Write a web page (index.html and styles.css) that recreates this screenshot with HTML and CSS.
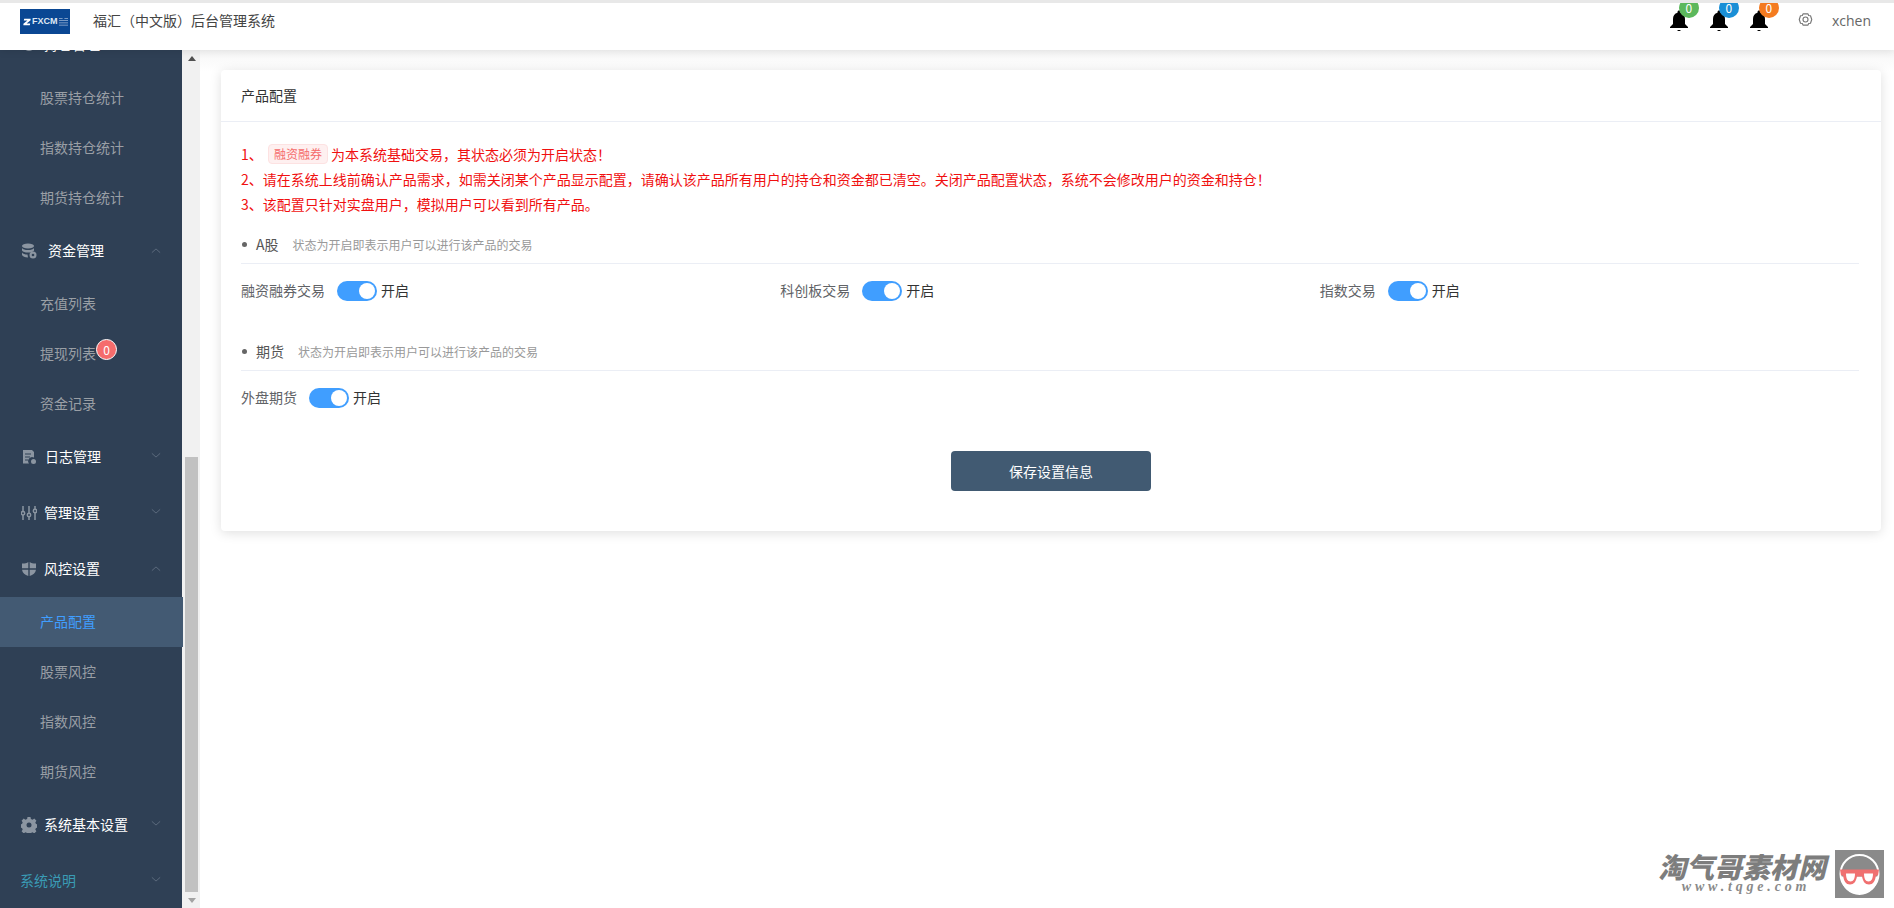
FILE: index.html
```html
<!DOCTYPE html>
<html lang="zh-CN">
<head>
    <meta charset="UTF-8">
    <title>福汇（中文版）后台管理系统</title>
    <link rel="stylesheet" href="styles.css">
</head>
<body>

<!-- Top bar -->
<header class="topbar">
    <div class="logo">
        <svg class="logo-z" viewBox="0 0 10 10"><path d="M1.500 1h8v1.800L4.500 7H9l-.5 2h-8v-1.800L5.500 3H1z" fill="#fff"/></svg>
        <span class="logo-text">FXCM</span>
        <svg class="logo-grid" viewBox="0 0 10 10"><path d="M0 1h4v1H0zM6 1h4v1H6zM0 3.500h10v1H0zM0 6h10v1H0zM0 8.500h10v1H0z" fill="#9fb6d6"/></svg>
    </div>
    <div class="site-title">福汇（中文版）后台管理系统</div>
    <div class="top-right">
        <div class="bell">
            <svg viewBox="0 0 24 24"><path d="M12 23c1 0 1.700-.4 1.700-1h-3.400c0 .6.700 1 1.700 1zM18 16v-5c0-3.100-1.600-5.600-4.500-6.300V4c0-.8-.7-1.500-1.500-1.500s-1.500.7-1.500 1.500v.7C7.600 5.400 6 7.900 6 11v5l-3 3v1h18v-1z"/></svg>
            <span class="bell-num green">0</span>
        </div>
        <div class="bell">
            <svg viewBox="0 0 24 24"><path d="M12 23c1 0 1.700-.4 1.700-1h-3.400c0 .6.700 1 1.700 1zM18 16v-5c0-3.100-1.600-5.600-4.500-6.300V4c0-.8-.7-1.500-1.500-1.500s-1.500.7-1.500 1.500v.7C7.600 5.400 6 7.900 6 11v5l-3 3v1h18v-1z"/></svg>
            <span class="bell-num blue">0</span>
        </div>
        <div class="bell">
            <svg viewBox="0 0 24 24"><path d="M12 23c1 0 1.700-.4 1.700-1h-3.400c0 .6.700 1 1.700 1zM18 16v-5c0-3.100-1.600-5.600-4.500-6.300V4c0-.8-.7-1.500-1.500-1.500s-1.500.7-1.500 1.500v.7C7.600 5.400 6 7.900 6 11v5l-3 3v1h18v-1z"/></svg>
            <span class="bell-num orange">0</span>
        </div>
        <svg class="top-gear" viewBox="0 0 24 24"><path d="M8 3h8l1 2.500 3 .5 2 6-2 6-3 .5-1 2.500H8l-1-2.500-3-.5-2-6 2-6 3-.5z" fill="none" stroke="#777" stroke-width="1.800" stroke-linejoin="round"/><circle cx="12" cy="12" r="4" fill="none" stroke="#777" stroke-width="1.800"/></svg>
        <span class="username">xchen</span>
    </div>
</header>

<div class="layout">
    <!-- Sidebar, scrolled to its end -->
    <aside class="sidebar">
        <nav class="menu">
            <div class="group">
                <svg class="group-icon" viewBox="0 0 16 16"><circle cx="8" cy="8" r="6" fill="#8b95a1"/></svg>
                <span class="group-name">持仓管理</span>
                <svg class="chevron up" viewBox="0 0 12 12"><path d="M1 8l5-4.500L11 8"/></svg>
            </div>
            <a class="sub">股票持仓统计</a>
            <a class="sub">指数持仓统计</a>
            <a class="sub">期货持仓统计</a>

            <div class="group">
                <svg class="group-icon" viewBox="0 0 16 16"><g fill="#8b95a1"><ellipse cx="7" cy="3" rx="6" ry="2.500"/><path d="M1 5c1 1.500 3 2 6 2s5-.5 6-2v2.500c-1 1.500-3 2-6 2s-5-.5-6-2zM1 9.500c1 1.500 3 2 5.500 2l.5 3c-3.500 0-5-1-6-2.500z"/><circle cx="12" cy="12" r="3.500"/></g><circle cx="12" cy="12" r="1.300" fill="#2f4055"/></svg>
                <span class="group-name gap-b">资金管理</span>
                <svg class="chevron up" viewBox="0 0 12 12"><path d="M1 8l5-4.500L11 8"/></svg>
            </div>
            <a class="sub">充值列表</a>
            <a class="sub">提现列表<span class="sub-num">0</span></a>
            <a class="sub">资金记录</a>

            <div class="group">
                <svg class="group-icon" viewBox="0 0 16 16"><path d="M2 1h9l2 2v5.500a4 4 0 0 0-5 6H2z" fill="#8b95a1"/><path d="M4 5h6M4 8h5M4 11h3" stroke="#2f4055" stroke-width="1.200"/><circle cx="12.500" cy="12.500" r="2.500" fill="#8b95a1"/></svg>
                <span class="group-name gap-c">日志管理</span>
                <svg class="chevron" viewBox="0 0 12 12"><path d="M1 4l5 4.500L11 4"/></svg>
            </div>
            <div class="group">
                <svg class="group-icon" viewBox="0 0 16 16"><g stroke="#8b95a1" stroke-width="1.500" fill="none"><path d="M2 1v5.500M2 10v5M8 1v7M8 12v3M14 1v3M14 8v7"/><circle cx="2" cy="8.200" r="1.700"/><circle cx="8" cy="10" r="1.700"/><circle cx="14" cy="6" r="1.700"/></g></svg>
                <span class="group-name">管理设置</span>
                <svg class="chevron" viewBox="0 0 12 12"><path d="M1 4l5 4.500L11 4"/></svg>
            </div>
            <div class="group">
                <svg class="group-icon" viewBox="0 0 16 16"><path d="M1 2.500C4 2.500 6 2 7.300 1v6.300H1zM8.700 1C10 2 12 2.500 15 2.500v4.800H8.700zM1 8.700h6.300V15C4 14 1.500 12 1 8.700zM8.700 8.700H15C14.500 12 12 14 8.700 15z" fill="#8b95a1"/></svg>
                <span class="group-name">风控设置</span>
                <svg class="chevron up" viewBox="0 0 12 12"><path d="M1 8l5-4.500L11 8"/></svg>
            </div>
            <a class="sub active">产品配置</a>
            <a class="sub">股票风控</a>
            <a class="sub">指数风控</a>
            <a class="sub">期货风控</a>

            <div class="group">
                <svg class="group-icon" viewBox="0 0 16 16"><path d="M6.500 0h3l.4 2 1.700.7 1.700-1.100 2.100 2.100-1.100 1.700.7 1.700 2 .4v3l-2 .4-.7 1.700 1.100 1.700-2.100 2.100-1.700-1.100-1.700.7-.4 2h-3l-.4-2-1.700-.7-1.700 1.100-2.100-2.100 1.100-1.700-.7-1.700-2-.4v-3l2-.4.7-1.700-1.100-1.700 2.100-2.100 1.700 1.100 1.700-.7z" fill="#8b95a1"/><circle cx="8" cy="8" r="2.500" fill="#2f4055"/></svg>
                <span class="group-name">系统基本设置</span>
                <svg class="chevron" viewBox="0 0 12 12"><path d="M1 4l5 4.500L11 4"/></svg>
            </div>
            <div class="group plain">
                <span class="group-name teal">系统说明</span>
                <svg class="chevron" viewBox="0 0 12 12"><path d="M1 4l5 4.500L11 4"/></svg>
            </div>
        </nav>
    </aside>

    <div class="scrollbar">
        <span class="arrow-up"></span>
        <span class="thumb"></span>
        <span class="arrow-down"></span>
    </div>

    <!-- Page content -->
    <main class="content">
        <section class="card">
            <div class="card-head">产品配置</div>
            <div class="card-body">
                <p class="note">1、 <span class="tag">融资融券</span> 为本系统基础交易，其状态必须为开启状态！</p>
                <p class="note">2、请在系统上线前确认产品需求，如需关闭某个产品显示配置，请确认该产品所有用户的持仓和资金都已清空。关闭产品配置状态，系统不会修改用户的资金和持仓！</p>
                <p class="note">3、该配置只针对实盘用户，模拟用户可以看到所有产品。</p>

                <div class="section-title first">
                    <span class="dot"></span>
                    <span class="section-name">A股</span>
                    <span class="section-tip">状态为开启即表示用户可以进行该产品的交易</span>
                </div>
                <div class="switch-row">
                    <div class="switch-item"><label>融资融券交易</label><span class="switch"></span><span class="switch-text">开启</span></div>
                    <div class="switch-item"><label>科创板交易</label><span class="switch"></span><span class="switch-text">开启</span></div>
                    <div class="switch-item"><label>指数交易</label><span class="switch"></span><span class="switch-text">开启</span></div>
                </div>

                <div class="section-title second">
                    <span class="dot"></span>
                    <span class="section-name">期货</span>
                    <span class="section-tip">状态为开启即表示用户可以进行该产品的交易</span>
                </div>
                <div class="switch-row">
                    <div class="switch-item"><label>外盘期货</label><span class="switch"></span><span class="switch-text">开启</span></div>
                </div>

                <div class="save-row">
                    <button class="save-btn">保存设置信息</button>
                </div>
            </div>
        </section>
    </main>
</div>

<!-- Watermark -->
<div class="watermark">
    <div class="wm-text">
        <div class="wm-name">淘气哥素材网</div>
        <div class="wm-url">www.tqge.com</div>
    </div>
    <div class="wm-box">
        <svg viewBox="0 0 49 47">
            <circle cx="24.500" cy="23.500" r="19" fill="#8a8a8a" stroke="#fff" stroke-width="2"/>
            <path d="M6 26a18.500 18.500 0 0 0 37 0z" fill="#fff"/>
            <path d="M5 19h39l-1 6h-2c-1 6-3 9-7 9s-6-3-7-8h-5c-1 5-3 8-7 8s-6-3-7-9H6z" fill="#f07070"/>
            <path d="M11 23h9c0 5-1.500 8-4.500 8S11 28 11 23zM29 23h9c0 5-1.500 8-4.500 8S29 28 29 23z" fill="#fff"/>
        </svg>
    </div>
</div>

</body>
</html>
```

FILE: styles.css
```css
* {
    box-sizing: border-box;
}

html, body {
    height: 100%;
}

body {
    margin: 0;
    overflow: hidden;
    background: #fff;
    color: #333;
    font-family: "Noto Sans CJK SC", "Liberation Sans", sans-serif;
    font-size: 14px;
}

/* top bar */
.topbar {
    position: relative;
    z-index: 2;
    display: flex;
    align-items: center;
    height: 50px;
    padding: 0 23px 10px 20px;
    overflow: hidden;
    background: #fff;
    border-top: 3px solid #e8e8e8;
    box-shadow: 0 1px 8px rgba(0, 0, 0, .1);
}

.logo {
    display: flex;
    align-items: center;
    width: 50px;
    height: 25px;
    padding-left: 3px;
    background: #0a4793;
}

.logo-z {
    width: 8px;
    height: 8px;
    flex: none;
}

.logo-text {
    margin: 0 1px 0 1px;
    color: #dfe8f3;
    font-family: "Liberation Sans", sans-serif;
    font-size: 9px;
    font-weight: bold;
    line-height: 1;
}

.logo-grid {
    width: 9px;
    height: 9px;
    flex: none;
}

.site-title {
    margin: 0 0 3px 23px;
    color: #444;
    font-size: 14px;
}

.top-right {
    display: flex;
    align-items: center;
    margin: 0 0 3px auto;
}

.bell {
    position: relative;
    width: 24px;
    height: 24px;
    margin-right: 16px;
}

.bell:nth-child(3) {
    margin-right: 0;
}

.bell svg {
    display: block;
    width: 24px;
    height: 24px;
}

.bell-num {
    position: absolute;
    top: -10px;
    left: 12px;
    width: 20px;
    height: 20px;
    border-radius: 50%;
    color: #fff;
    font-size: 12px;
    line-height: 20px;
    text-align: center;
}

.green { background: #5cb85c; }
.blue { background: #1a8fd6; }
.orange { background: #f47b20; }

.top-gear {
    width: 15px;
    height: 15px;
    margin: 0 0 2px 27px;
}

.username {
    margin-left: 19px;
    color: #666;
    font-family: "Open Sans", sans-serif;
    font-size: 14px;
}

/* page body */
.layout {
    display: flex;
    height: 858px;
}

.sidebar {
    display: flex;
    flex-direction: column;
    justify-content: flex-end;
    width: 183px;
    height: 858px;
    overflow: hidden;
    flex: none;
    background: linear-gradient(to right, #2f4055 182px, #f1f1f1 182px);
}

.menu {
    flex: none;
    margin-bottom: -1px;
}

.group {
    display: flex;
    align-items: center;
    width: 182px;
    height: 56px;
    padding-left: 21px;
}

.group.plain {
    padding-left: 20px;
}

.group-icon {
    width: 16px;
    height: 16px;
    flex: none;
}

.group-name {
    margin: 0 0 2px 7px;
    color: #fff;
}

.gap-b {
    margin-left: 11px;
}

.gap-c {
    margin-left: 8px;
}

.group.plain .group-name {
    margin-left: 0;
}

.group-name.teal {
    color: #3a9cb5;
}

.chevron {
    width: 10px;
    height: 10px;
    margin: 0 21px 4px auto;
    fill: none;
    stroke: #5f6d80;
    stroke-width: 1.100;
}

.chevron.up {
    margin-bottom: 0;
}

.sub {
    position: relative;
    display: block;
    width: 182px;
    height: 50px;
    padding-left: 40px;
    color: #9a9fa5;
    line-height: 48px;
}

.sub.active {
    width: 183px;
    background: #435a73;
    color: #409eff;
}

.sub-num {
    position: absolute;
    top: 10px;
    left: 96px;
    width: 21px;
    height: 21px;
    border: 1px solid #fff;
    border-radius: 50%;
    background: #f56c6c;
    color: #fff;
    font-size: 12px;
    line-height: 19px;
    text-align: center;
}

/* fake browser scrollbar */
.scrollbar {
    display: flex;
    flex-direction: column;
    align-items: center;
    width: 17px;
    flex: none;
    background: #f1f1f1;
}

.arrow-up {
    width: 0;
    height: 0;
    margin-top: 6px;
    border: 4px solid transparent;
    border-top: 0;
    border-bottom: 5px solid #505050;
}

.thumb {
    width: 13px;
    height: 435px;
    margin: auto 0 0 -1px;
    background: #c1c1c1;
}

.arrow-down {
    width: 0;
    height: 0;
    margin: 6px 0 5px;
    border: 4px solid transparent;
    border-bottom: 0;
    border-top: 5px solid #a3a3a3;
}

.content {
    flex: 1;
    padding: 20px 13px 0 21px;
    background: linear-gradient(#f6f6f6, #fff 22px);
}

.card {
    height: 461px;
    background: #fff;
    border-radius: 4px;
    box-shadow: 0 2px 12px rgba(0, 0, 0, .13);
}

.card-head {
    height: 52px;
    padding-left: 20px;
    border-bottom: 1px solid #ebeef5;
    color: #333;
    font-size: 14px;
    line-height: 50px;
}

.card-body {
    padding: 20px 22px 0 20px;
}

.note {
    height: 25px;
    margin: 0;
    color: #f01010;
    font-size: 14px;
    line-height: 25px;
    white-space: nowrap;
}

.tag {
    display: inline-block;
    width: 60px;
    height: 20px;
    margin: 0 0 0 2px;
    border: 1px solid #fde2e2;
    border-radius: 4px;
    background: #fef0f0;
    color: #f56c6c;
    font-size: 12px;
    line-height: 18px;
    text-align: center;
    vertical-align: 1px;
}

.section-title {
    display: flex;
    align-items: center;
    height: 29px;
    padding-bottom: 9px;
    border-bottom: 1px solid #ebeef5;
}

.section-title.first {
    margin-top: 18px;
}

.section-title.second {
    margin-top: 41px;
}

.dot {
    width: 5px;
    height: 5px;
    margin-left: 1px;
    border-radius: 50%;
    background: #666;
}

.section-name {
    margin: 0 0 2px 9px;
    color: #555;
    font-size: 14px;
}

.section-tip {
    margin-left: 14px;
    color: #999;
    font-size: 12px;
}

.switch-row {
    display: grid;
    grid-template-columns: repeat(3, 1fr);
    margin-top: 17px;
}

.switch-item {
    display: flex;
    align-items: center;
    height: 20px;
}

.switch-item label {
    margin: 0 12px 2px 0;
    color: #606266;
}

.switch {
    position: relative;
    width: 40px;
    height: 20px;
    border-radius: 10px;
    background: #409eff;
}

.switch::after {
    content: "";
    position: absolute;
    top: 2px;
    right: 2px;
    width: 16px;
    height: 16px;
    border-radius: 50%;
    background: #fff;
}

.switch-text {
    margin: 0 0 2px 4px;
    color: #333;
}

.save-row {
    display: flex;
    justify-content: center;
    margin-top: 43px;
}

.save-btn {
    width: 200px;
    height: 40px;
    margin-left: 2px;
    border: 0;
    border-radius: 4px;
    background: #415a72;
    color: #fff;
    font-family: inherit;
    font-size: 14px;
}

/* watermark over the corner */
.watermark {
    position: absolute;
    right: 10px;
    bottom: 10px;
    display: flex;
    gap: 9px;
}

.wm-text {
    width: 168px;
    margin-top: 2px;
    text-align: center;
}

.wm-name {
    color: #7d7d7d;
    font-size: 28px;
    font-weight: 900;
    font-style: italic;
    line-height: 28px;
    white-space: nowrap;
}

.wm-url {
    padding-left: 8px;
    color: #8a8a8a;
    font-family: "Liberation Serif", serif;
    font-size: 14px;
    font-weight: bold;
    font-style: italic;
    line-height: 14px;
    letter-spacing: 3.800px;
}

.wm-box {
    width: 49px;
    height: 48px;
    background: #8a8a8a;
}

.wm-box svg {
    display: block;
    width: 49px;
    height: 48px;
}
```
